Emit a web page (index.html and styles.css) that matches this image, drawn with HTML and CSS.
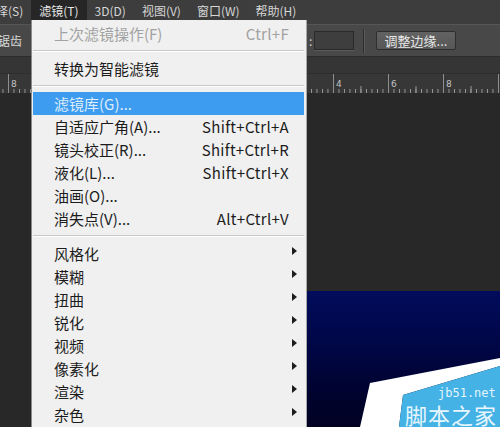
FILE: index.html
```html
<!DOCTYPE html>
<html lang="zh-CN">
<head>
    <meta charset="UTF-8">
    <meta name="viewport" content="width=device-width, initial-scale=1.0">
    <title>滤镜菜单</title>
    <link rel="stylesheet" href="styles.css">
</head>
<body>
    <div class="app">
        <div class="menubar">
            <span class="mb-item first">选择(S)</span>
            <span class="mb-item active">滤镜(T)</span>
            <span class="mb-item">3D(D)</span>
            <span class="mb-item">视图(V)</span>
            <span class="mb-item">窗口(W)</span>
            <span class="mb-item">帮助(H)</span>
        </div>

        <div class="options">
            <div class="opt-left"><span class="opt-label">消除锯齿</span></div>
            <span class="opt-colon">:</span>
            <span class="opt-input"></span>
            <span class="opt-divider"></span>
            <button class="opt-button">调整边缘...</button>
        </div>

        <div class="tabbar"></div>

        <div class="ruler">
            <div class="ruler-seg ruler-left"><span>8</span></div>
            <div class="ruler-seg ruler-right"><span>4</span><span>6</span><span>8</span></div>
        </div>

        <div class="canvas">
            <div class="doc">
                <svg class="wm-shape" viewBox="0 0 193 136" preserveAspectRatio="none">
                    <polygon points="53,136 63,92 193,67 193,75 96,104 92,136" fill="#ffffff"/>
                    <polygon points="92,136 96,104 193,75 193,136" fill="#45b2e5"/>
                </svg>
                <span class="wm-url">jb51.net</span>
                <span class="wm-name">脚本之家</span>
            </div>
        </div>

        <!-- Filter dropdown -->
        <div class="menu">
            <div class="item disabled"><span>上次滤镜操作(F)</span><span class="key">Ctrl+F</span></div>
            <div class="sep"></div>
            <div class="item"><span>转换为智能滤镜</span></div>
            <div class="sep"></div>
            <div class="item hover"><span>滤镜库(G)...</span></div>
            <div class="item"><span>自适应广角(A)...</span><span class="key">Shift+Ctrl+A</span></div>
            <div class="item"><span>镜头校正(R)...</span><span class="key">Shift+Ctrl+R</span></div>
            <div class="item"><span>液化(L)...</span><span class="key">Shift+Ctrl+X</span></div>
            <div class="item"><span>油画(O)...</span></div>
            <div class="item"><span>消失点(V)...</span><span class="key">Alt+Ctrl+V</span></div>
            <div class="sep"></div>
            <div class="item"><span>风格化</span><i class="arrow"></i></div>
            <div class="item"><span>模糊</span><i class="arrow"></i></div>
            <div class="item"><span>扭曲</span><i class="arrow"></i></div>
            <div class="item"><span>锐化</span><i class="arrow"></i></div>
            <div class="item"><span>视频</span><i class="arrow"></i></div>
            <div class="item"><span>像素化</span><i class="arrow"></i></div>
            <div class="item"><span>渲染</span><i class="arrow"></i></div>
            <div class="item"><span>杂色</span><i class="arrow"></i></div>
        </div>
    </div>
</body>
</html>
```

FILE: styles.css
```css
html, body {
    margin: 0;
    padding: 0;
    width: 500px;
    height: 427px;
    overflow: hidden;
    background: #282828;
    font-family: "Noto Sans CJK SC", "Noto Sans", sans-serif;
}
.app {
    position: relative;
    width: 500px;
    height: 427px;
    display: flex;
    flex-direction: column;
    overflow: hidden;
}

/* top menu bar */
.menubar {
    height: 24px;
    flex: none;
    display: flex;
    background: #3d3d3d;
    font-size: 12px;
    color: #d6d6d6;
}
.mb-item { padding: 0 8px; line-height: 21px; height: 22px; white-space: nowrap; }
.mb-item.first { margin-left: -24px; }
.mb-item.active { background: #262626; color: #e8e8e8; }

/* tool options bar */
.options {
    height: 33px;
    flex: none;
    box-sizing: border-box;
    display: flex;
    align-items: center;
    background: #484848;
    border-top: 1px solid #555;
    border-bottom: 1px solid #2c2c2c;
    font-size: 12px;
    color: #d8d8d8;
}
.opt-left { width: 309px; flex: none; overflow: hidden; white-space: nowrap; }
.opt-label { display: block; margin-left: -26px; }
.opt-colon { width: 4px; color: #cfcfcf; }
.opt-input {
    width: 38px;
    height: 17px;
    margin-left: 1px;
    background: #3e3e3e;
    border: 1px solid #2a2a2a;
    box-shadow: 0 1px 0 #5a5a5a;
}
.opt-divider {
    width: 1px;
    height: 24px;
    margin-left: 9px;
    background: #2c2c2c;
    border-right: 1px solid #5c5c5c;
}
.opt-button {
    margin-left: 11px;
    width: 80px;
    height: 19px;
    padding: 0;
    background: linear-gradient(#626262, #575757);
    border: 1px solid #2e2e2e;
    border-radius: 2px;
    color: #e6e6e6;
    font-family: "Noto Sans CJK SC", sans-serif;
    font-size: 13px;
    line-height: 16px;
}

.tabbar { height: 16px; flex: none; background: #353535; }

/* rulers */
.ruler {
    height: 20px;
    flex: none;
    box-sizing: border-box;
    display: flex;
    background: #373737;
    border-top: 1px solid #2e2e2e;
}
.ruler-seg {
    display: flex;
    font-family: "DejaVu Sans", sans-serif;
    font-size: 9px;
    line-height: 9px;
    color: #c4c4c4;
    background-image:
        linear-gradient(90deg, #8e8e8e 1px, transparent 1px),
        linear-gradient(90deg, #9a9a9a 1px, transparent 1px),
        linear-gradient(90deg, #9a9a9a 1px, transparent 1px);
    background-repeat: repeat-x;
    background-size: 55px 100%, 55px 7px, 5.5px 4px;
}
.ruler-seg span { flex: 0 0 55px; padding-top: 6px; }
.ruler-left {
    width: 307px;
    flex: none;
    padding-left: 11px;
    box-sizing: border-box;
    background-position: 8px 0, 35.5px 100%, 8px 100%;
}
.ruler-right {
    flex: 1;
    padding-left: 29px;
    background-position: 26px 0, 53.5px 100%, 26px 100%;
}

/* canvas with document */
.canvas {
    flex: 1;
    display: flex;
    padding: 198px 0 0 307px;
    background: #282828;
}
.doc {
    flex: 1;
    position: relative;
    height: 136px;
    overflow: hidden;
    background: linear-gradient(180deg, #020c5c 0%, #000646 40%, #00032e 75%, #000122 100%);
}
.wm-shape { position: absolute; left: 0; top: 0; width: 100%; height: 100%; }
.wm-url {
    position: absolute;
    left: 131px;
    top: 96px;
    font-family: "DejaVu Sans Mono", monospace;
    font-size: 12px;
    line-height: 12px;
    color: #e2f4fd;
}
.wm-name {
    position: absolute;
    left: 98px;
    top: 112px;
    font-size: 22px;
    line-height: 22px;
    letter-spacing: 1px;
    color: #e8f6fe;
    white-space: nowrap;
}

/* dropdown menu */
.menu {
    position: absolute;
    left: 31px;
    top: 20px;
    bottom: -10px;
    width: 276px;
    box-sizing: border-box;
    padding-top: 2px;
    background: #f0f0f0;
    border-left: 1px solid #8a8a8a;
    border-right: 1px solid #a8a8a8;
    font-size: 15px;
    color: #1c1c1c;
}
.item {
    display: grid;
    grid-template-columns: 1fr auto 8px;
    align-items: center;
    height: 23px;
    line-height: 23px;
    margin: 0 2px 0 1px;
    padding: 0 7px 0 21px;
    white-space: nowrap;
}
.item.disabled { color: #a2a2a2; }
.item.hover { background: #3d9bf0; color: #deedfb; }
.key { letter-spacing: 0.3px; }
.arrow {
    grid-column: 3;
    justify-self: end;
    width: 0;
    height: 0;
    margin-bottom: 6px;
    border-left: 5px solid #1c1c1c;
    border-top: 4px solid transparent;
    border-bottom: 4px solid transparent;
}
.sep {
    height: 0;
    margin: 5px 2px 5px 1px;
    border-top: 1px solid #c8c8c8;
    border-bottom: 1px solid #ffffff;
}
```
